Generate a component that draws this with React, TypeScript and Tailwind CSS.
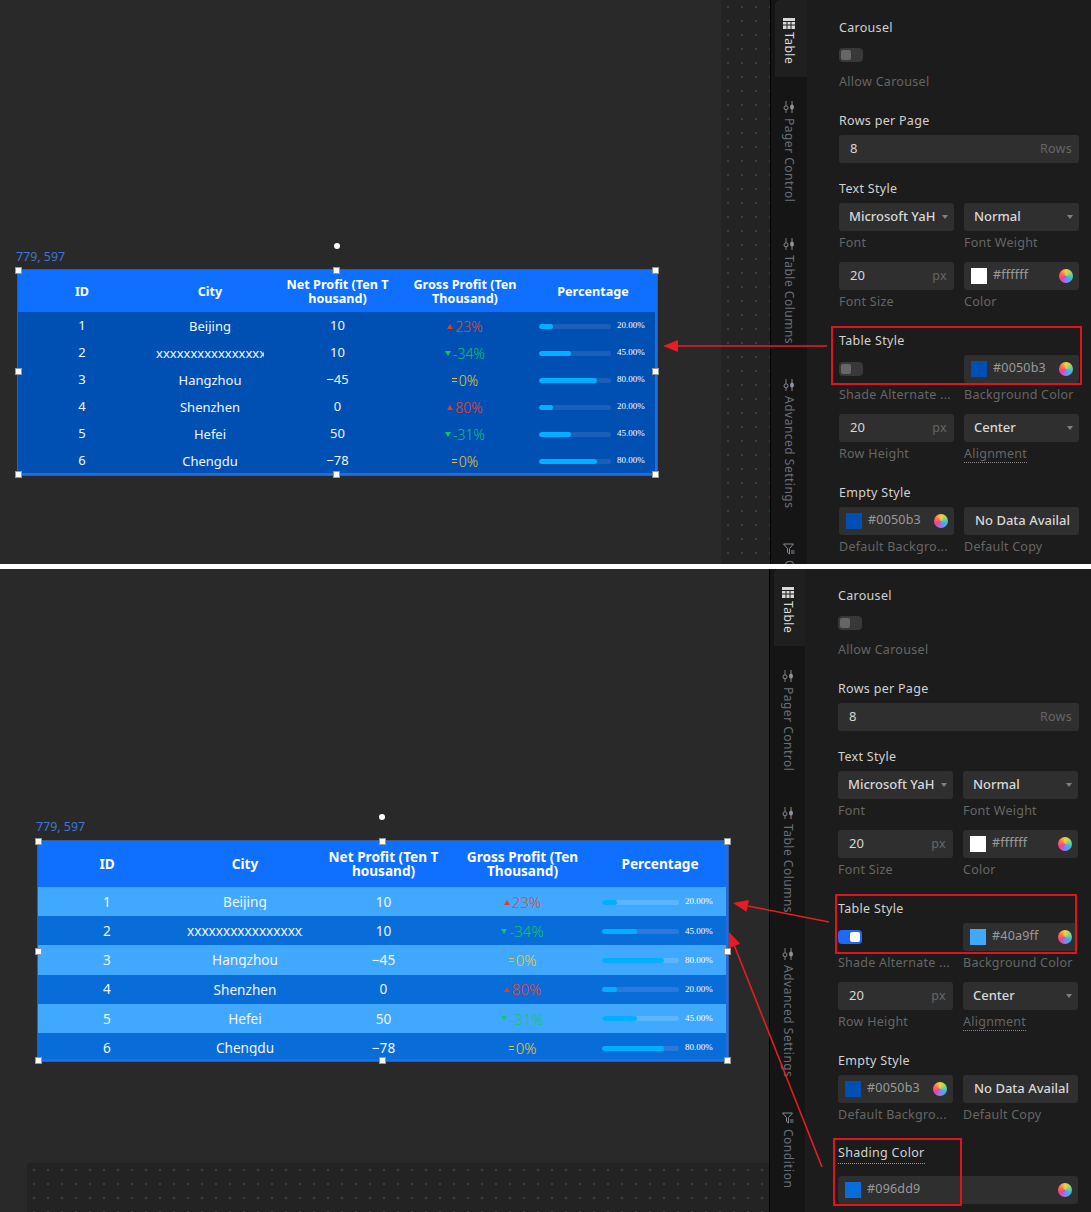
import React from "react";

const font = "font-['Noto_Sans','Noto_Sans_CJK_SC',sans-serif]";

const tableRows = [
  { id: 1, city: "Beijing", net: "10", gross: "23%", trend: "up", pct: 20 },
  { id: 2, city: "xxxxxxxxxxxxxxxxxx", net: "10", gross: "-34%", trend: "down", pct: 45 },
  { id: 3, city: "Hangzhou", net: "\u221245", gross: "0%", trend: "flat", pct: 80 },
  { id: 4, city: "Shenzhen", net: "0", gross: "80%", trend: "up", pct: 20 },
  { id: 5, city: "Hefei", net: "50", gross: "-31%", trend: "down", pct: 45 },
  { id: 6, city: "Chengdu", net: "\u221278", gross: "0%", trend: "flat", pct: 80 },
];

const TableIcon = () => (
  <svg width="12" height="11" viewBox="0 0 12 11">
    <path d="M0 0h12v11H0z" fill="#d8d8d8" />
    <path d="M0 3.5h12M0 7h12M4 3.5V11M8 3.5V11" stroke="#1f1f1f" strokeWidth="1" />
  </svg>
);

const SliderIcon = () => (
  <svg width="12" height="12" viewBox="0 0 12 12" fill="none">
    <path d="M3 0v4.5M3 9v3" stroke="#7f7f7f" strokeWidth="1" />
    <circle cx="3" cy="6.8" r="2" stroke="#8a8f98" strokeWidth="1" />
    <path d="M9 0v12" stroke="#a08a68" strokeWidth="1" />
    <ellipse cx="9" cy="6" rx="2" ry="2.6" fill="#8b93a3" />
  </svg>
);

const FilterIcon = () => (
  <svg width="12" height="12" viewBox="0 0 12 12" fill="none">
    <path d="M0.5 1h10L6.5 5.5V11L4.5 9.5V5.5z" stroke="#858a94" strokeWidth="1" />
    <path d="M8 8h3.5M8 10h3.5" stroke="#858a94" strokeWidth="1" />
  </svg>
);

const Trend = ({ trend }: { trend: string }) => {
  if (trend === "up")
    return <span className="h-0 w-0 border-x-[3px] border-b-[5px] border-x-transparent border-b-[#f03a17]" />;
  if (trend === "down")
    return <span className="h-0 w-0 border-x-[3px] border-t-[5px] border-x-transparent border-t-[#12c46b]" />;
  return <span className="h-[4px] w-[5px] border-y border-[#e8c22a]" />;
};

const trendColor: Record<string, string> = {
  up: "text-[#e8452c]",
  down: "text-[#12c46b]",
  flat: "text-[#f2c81e]",
};

const DataTable = ({ big }: { big?: boolean }) => {
  const cell = "flex items-center justify-center overflow-hidden";
  const cols = big ? "grid-cols-[138px_138px_139px_139px_136px]" : "grid-cols-[128px_128px_127px_128px_128px]";
  return (
    <div
      className={`${big ? "left-[38px] top-[272px] h-[220px] w-[690px]" : "left-[18px] top-[270px] h-[205px] w-[639px]"} absolute overflow-hidden border-r-2 border-b-2 border-[#1d6fe3] bg-[#0050b3] shadow-[0_0_0_1px_#3a5a9a]`}
    >
      <div
        className={`grid ${cols} ${big ? "h-[46px] text-[13.6px]" : "h-[42px] pt-[2px] text-[12.6px]"} items-center bg-[#0f6fff] text-center font-bold leading-[14px] text-white`}
      >
        <div>ID</div>
        <div>City</div>
        <div>Net Profit (Ten T housand)</div>
        <div className="px-2">Gross Profit (Ten Thousand)</div>
        <div>Percentage</div>
      </div>
      {tableRows.map((r, i) => (
        <div
          key={r.id}
          className={`grid ${cols} ${big ? "h-[29.2px] text-[13.6px]" : "h-[27px] text-[13px]"} items-center pt-[1px] ${big ? (i % 2 === 0 ? "bg-[#40a9ff]" : "bg-[#096dd9]") : ""} text-[#f2f6ff]`}
        >
          <div className={cell}>{r.id}</div>
          <div className={`${cell} h-[15px] leading-[18px]`}>
            <span className={`${big ? "w-[116px]" : "w-[108px]"} shrink-0 overflow-hidden whitespace-nowrap text-center`}>{r.city}</span>
          </div>
          <div className={cell}>{r.net}</div>
          <div className={`${cell} gap-[2px]`}>
            <Trend trend={r.trend} />
            <span className={`${big ? "text-[15px]" : "text-[14px]"} font-light ${trendColor[r.trend]}`}>{r.gross}</span>
          </div>
          <div className="flex items-center pl-[10px]">
            <div
              className={`${big ? "w-[77px]" : "w-[72px]"} h-[5px] overflow-hidden rounded-full ${big ? (i % 2 === 0 ? "bg-[#5cb6ff]" : "bg-[#2a7ade]") : "bg-[#1c5fb8]"}`}
            >
              <div className="h-full rounded-full bg-[#00b0ff]" style={{ width: `${r.pct}%` }} />
            </div>
            <span className="ml-[6px] font-['Liberation_Serif',serif] text-[9px] text-white">{r.pct}.00%</span>
          </div>
        </div>
      ))}
    </div>
  );
};

const Handle = ({ className }: { className: string }) => (
  <span className={`absolute h-[7px] w-[7px] border border-[#999] bg-white ${className}`} />
);

const Label = ({ children, dotted }: { children: React.ReactNode; dotted?: boolean }) => (
  <div
    className={`h-5 text-[12.5px] leading-5 tracking-[0.3px] text-[#d2d2d2] ${dotted ? "w-fit border-b border-dotted border-[#999] leading-[17px]" : ""}`}
  >
    {children}
  </div>
);

const Help = ({ children, dotted }: { children: React.ReactNode; dotted?: boolean }) => (
  <div className="mt-[2px] h-5 overflow-hidden whitespace-nowrap text-[12.5px] leading-5 tracking-[0.25px] text-[#666]">
    <span className={dotted ? "border-b border-dotted border-[#888]" : ""}>{children}</span>
  </div>
);

const Field = ({ children, className = "" }: { children: React.ReactNode; className?: string }) => (
  <div className={`flex h-7 items-center rounded-[3px] bg-[#2f2f2f] text-[13px] ${className}`}>{children}</div>
);

const Num = ({ value, unit }: { value: string; unit: string }) => (
  <Field className="justify-between pl-[11px] pr-[7px]">
    <span className="text-[#d8d8d8]">{value}</span>
    <span className="text-[12.5px] tracking-[0.3px] text-[#666]">{unit}</span>
  </Field>
);

const Select = ({ value }: { value: string }) => (
  <Field className="justify-between overflow-hidden pl-[10px] pr-[6px]">
    <span className="whitespace-nowrap font-medium text-[#d8d8d8]">{value}</span>
    <span className="ml-1 h-0 w-0 shrink-0 border-x-[3.5px] border-t-[4px] border-x-transparent border-t-[#808080]" />
  </Field>
);

const ColorField = ({ color, swatch }: { color: string; swatch: string }) => (
  <Field className="pl-[7px] pr-[6px]">
    <span className={`h-4 w-4 shrink-0 ${swatch}`} />
    <span className="ml-[6px] flex-1 pb-[2px] text-[12.5px] tracking-[0.2px] text-[#9a9a9a]">{color}</span>
    <span className="h-[14px] w-[14px] shrink-0 rounded-full bg-[conic-gradient(#f6d13c,#8ad86c,#33b5f0,#8d7df0,#f03ea0,#ff7050,#f6d13c)]" />
  </Field>
);

const Toggle = ({ on }: { on?: boolean }) => (
  <div
    className={`flex h-[14px] w-6 items-center rounded-[4px] ${on ? "justify-end bg-[#1f69f5] pr-[2px]" : "bg-[#383838] pl-[2px]"}`}
  >
    <span className={`h-[10px] w-[10px] rounded-[2px] ${on ? "bg-white" : "bg-[#666]"}`} />
  </div>
);

const Panel = ({ second }: { second?: boolean }) => (
  <div className={`${second ? "pl-[33px] pt-[17px]" : "pl-[32px] pt-[18px]"} h-full flex-1 overflow-hidden bg-[#1c1c1c] pr-3`}>
    <Label>Carousel</Label>
    <div className="mt-[11px] flex h-3 items-center">
      <Toggle />
    </div>
    <div className="mt-[11px] h-5 text-[12.5px] leading-5 tracking-[0.3px] text-[#666]">Allow Carousel</div>

    <div className="mt-[19px]">
      <Label>Rows per Page</Label>
      <div className="mt-1">
        <Num value="8" unit="Rows" />
      </div>
    </div>

    <div className="mt-4">
      <Label>Text Style</Label>
      <div className="mt-1 grid grid-cols-[115px_115px] gap-x-[10px]">
        <div>
          <Select value="Microsoft YaH" />
          <Help>Font</Help>
        </div>
        <div>
          <Select value="Normal" />
          <Help>Font Weight</Help>
        </div>
        <div className="mt-[9px]">
          <Num value="20" unit="px" />
          <Help>Font Size</Help>
        </div>
        <div className="mt-[9px]">
          <ColorField color="#ffffff" swatch="bg-white" />
          <Help>Color</Help>
        </div>
      </div>
    </div>

    <div className="mt-[19px]">
      <Label>Table Style</Label>
      <div className="mt-1 grid grid-cols-[115px_115px] gap-x-[10px]">
        <div>
          <div className="flex h-7 items-center pb-[1px]">
            <Toggle on={second} />
          </div>
          <Help>Shade Alternate ...</Help>
        </div>
        <div>
          <ColorField
            color={second ? "#40a9ff" : "#0050b3"}
            swatch={second ? "bg-[#40a9ff]" : "bg-[#0050b3]"}
          />
          <Help>Background Color</Help>
        </div>
        <div className="mt-[9px]">
          <Num value="20" unit="px" />
          <Help>Row Height</Help>
        </div>
        <div className="mt-[9px]">
          <Select value="Center" />
          <Help dotted>Alignment</Help>
        </div>
      </div>
    </div>

    <div className="mt-[19px]">
      <Label>Empty Style</Label>
      <div className="mt-1 grid grid-cols-[115px_115px] gap-x-[10px]">
        <div>
          <ColorField color="#0050b3" swatch="bg-[#0050b3]" />
          <Help>Default Backgro...</Help>
        </div>
        <div>
          <Field className="overflow-hidden pl-[11px]">
            <span className="whitespace-nowrap font-medium text-[#d8d8d8]">No Data Availal</span>
          </Field>
          <Help>Default Copy</Help>
        </div>
      </div>
    </div>

    {second && (
      <div className="mt-[19px]">
        <Label dotted>Shading Color</Label>
        <div className="mt-[12px] w-[240px]">
          <ColorField color="#096dd9" swatch="bg-[#096dd9]" />
        </div>
      </div>
    )}
  </div>
);

const RailTab = ({ icon, label, className = "" }: { icon: React.ReactNode; label: string; className?: string }) => (
  <div className={`flex flex-col items-center ${className}`}>
    {icon}
    <span className="mt-[5px] whitespace-nowrap text-[12px] leading-[14px] tracking-[0.5px] text-[#6a7079] [writing-mode:vertical-rl]">
      {label}
    </span>
  </div>
);

const Rail = ({ second }: { second?: boolean }) => (
  <div className={`${second ? "w-[36px]" : "w-[37px]"} h-full shrink-0 overflow-hidden border-l border-[#000] bg-[#151515] pl-[4px]`}>
    <div className="flex h-[77px] flex-col items-center rounded-tl-[5px] bg-[#1f1f1f] pr-[4px] pt-[18px]">
      <TableIcon />
      <span className="mt-[3px] text-[12px] leading-[14px] tracking-[0.5px] text-[#dcdcdc] [writing-mode:vertical-rl]">Table</span>
    </div>
    <div className="pr-[4px] pt-[24px]">
      <RailTab icon={<SliderIcon />} label="Pager Control" />
      <RailTab icon={<SliderIcon />} label="Table Columns" className="mt-[36px]" />
      <RailTab icon={<SliderIcon />} label="Advanced Settings" className="mt-[35px]" />
      <RailTab icon={<FilterIcon />} label="Condition" className="mt-[34px]" />
    </div>
  </div>
);

const dots = "bg-[#232323] bg-[radial-gradient(#3d3d3d_1px,transparent_1px)] bg-[size:14px_14px]";

const Arrow = ({ x1, y1, x2, y2 }: { x1: number; y1: number; x2: number; y2: number }) => {
  const a = Math.atan2(y2 - y1, x2 - x1);
  const len = 15;
  const w = 6;
  const bx = x2 - Math.cos(a) * len;
  const by = y2 - Math.sin(a) * len;
  const pts = `${x2},${y2} ${bx - Math.sin(a) * w},${by + Math.cos(a) * w} ${bx + Math.sin(a) * w},${by - Math.cos(a) * w}`;
  return (
    <>
      <line x1={x1} y1={y1} x2={bx} y2={by} stroke="#e81c24" strokeWidth="1.6" />
      <polygon points={pts} fill="#e81c24" />
    </>
  );
};

const RedBox = ({ className }: { className: string }) => (
  <div className={`absolute border-2 border-[#e0141e] ${className}`} />
);

const TopShot = () => (
  <div className={`relative flex h-[564px] overflow-hidden ${font}`}>
    <div className="relative h-full w-[721px] shrink-0 bg-[#292929]">
      <div className="absolute left-[16px] top-[249px] text-[12.4px] leading-4 text-[#3f74d6]">779, 597</div>
      <span className="absolute left-[334px] top-[243px] h-[6px] w-[6px] rounded-full bg-white" />
      <DataTable />
      <Handle className="left-[15px] top-[267px]" />
      <Handle className="left-[333px] top-[267px]" />
      <Handle className="left-[652px] top-[267px]" />
      <Handle className="left-[15px] top-[368px]" />
      <Handle className="left-[652px] top-[368px]" />
      <Handle className="left-[15px] top-[471px]" />
      <Handle className="left-[333px] top-[471px]" />
      <Handle className="left-[652px] top-[471px]" />
    </div>
    <div className={`h-full w-[49px] shrink-0 ${dots}`} />
    <Rail />
    <Panel />
    <RedBox className="left-[831px] top-[326px] h-[59px] w-[251px]" />
    <svg className="pointer-events-none absolute inset-0" width="1091" height="564">
      <Arrow x1={827} y1={346} x2={663} y2={346} />
    </svg>
  </div>
);

const BottomShot = () => (
  <div className={`relative flex h-[643px] overflow-hidden ${font}`}>
    <div className="flex h-full w-[769px] shrink-0 flex-col bg-[#292929]">
      <div className="relative flex-1">
        <div className="absolute left-[36px] top-[250px] text-[12.4px] leading-4 text-[#3f74d6]">779, 597</div>
        <span className="absolute left-[379px] top-[245px] h-[6px] w-[6px] rounded-full bg-white" />
        <DataTable big />
        <Handle className="left-[35px] top-[269px]" />
        <Handle className="left-[379px] top-[269px]" />
        <Handle className="left-[724px] top-[269px]" />
        <Handle className="left-[35px] top-[379px]" />
        <Handle className="left-[724px] top-[379px]" />
        <Handle className="left-[35px] top-[488px]" />
        <Handle className="left-[379px] top-[488px]" />
        <Handle className="left-[724px] top-[488px]" />
      </div>
      <div className={`ml-[27px] h-[49px] shrink-0 ${dots}`} />
    </div>
    <Rail second />
    <Panel second />
    <RedBox className="left-[835px] top-[325px] h-[60px] w-[242px]" />
    <RedBox className="left-[833px] top-[569px] h-[68px] w-[129px]" />
    <svg className="pointer-events-none absolute inset-0" width="1091" height="643">
      <Arrow x1={829} y1={353} x2={733} y2={334} />
      <Arrow x1={822} y1={598} x2={729} y2={363} />
    </svg>
  </div>
);

export default function App() {
  return (
    <div className="h-[1212px] w-[1091px] overflow-hidden bg-white">
      <TopShot />
      <div className="h-[5px] bg-white" />
      <BottomShot />
    </div>
  );
}
